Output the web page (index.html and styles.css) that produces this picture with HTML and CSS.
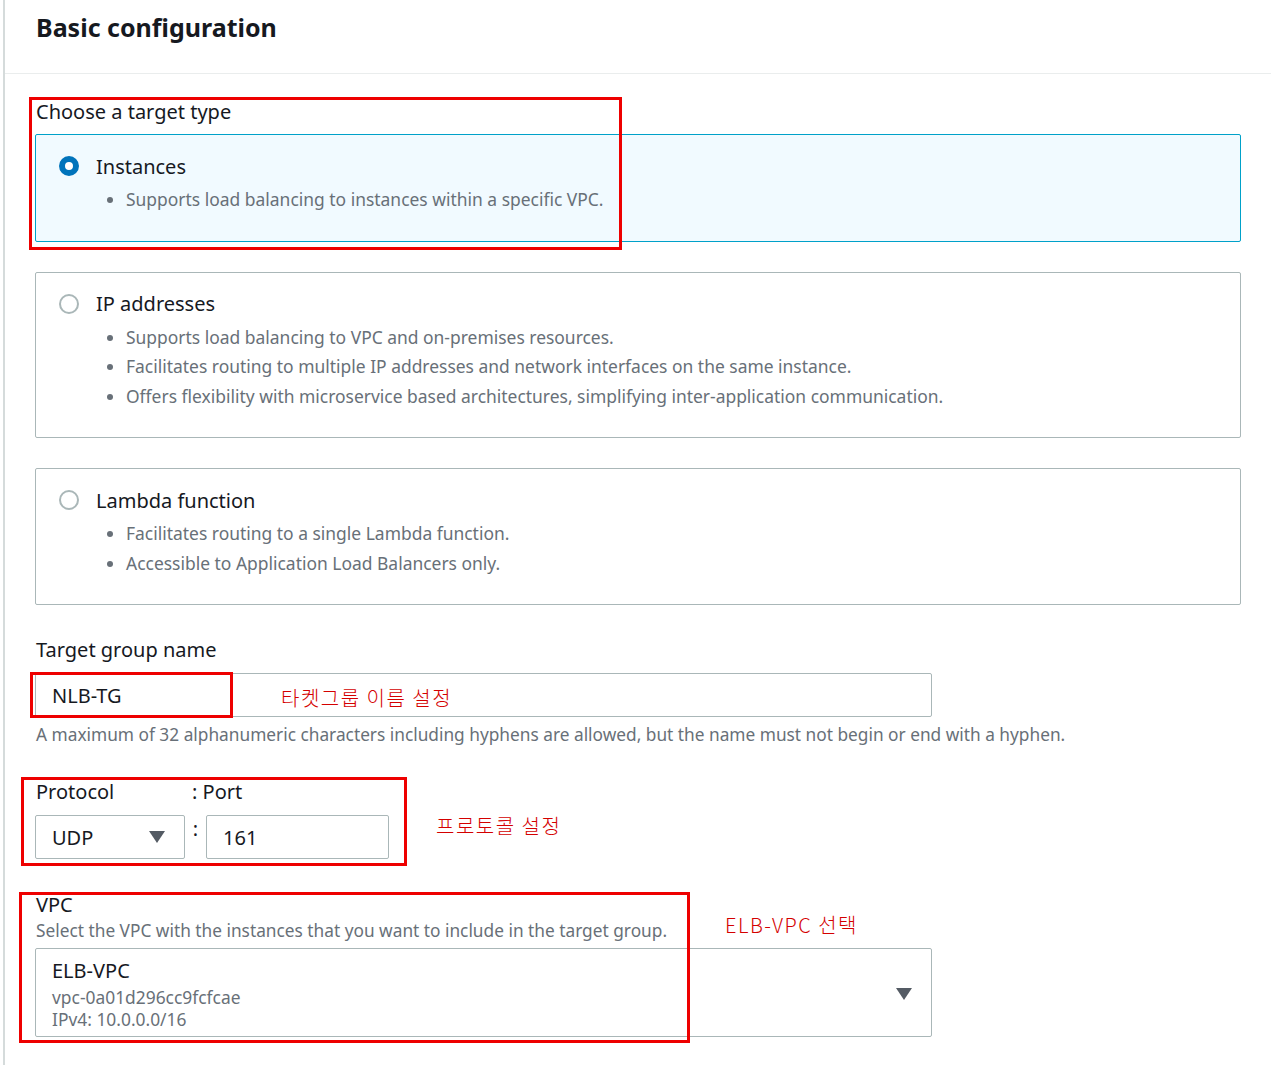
FILE: index.html
```html
<!DOCTYPE html>
<html lang="en">
<head>
    <meta charset="UTF-8">
    <meta name="viewport" content="width=device-width, initial-scale=1.0">
    <title>Basic configuration</title>
    <link rel="stylesheet" href="styles.css">
</head>
<body>
    <div class="page">
        <div class="header">
            <h2>Basic configuration</h2>
        </div>

        <div class="content">
            <div class="field-label">Choose a target type</div>

            <div class="tile selected">
                <div class="tile-head">
                    <span class="radio checked"></span>
                    <span class="tile-title">Instances</span>
                </div>
                <ul>
                    <li>Supports load balancing to instances within a specific VPC.</li>
                </ul>
            </div>

            <div class="tile">
                <div class="tile-head">
                    <span class="radio"></span>
                    <span class="tile-title">IP addresses</span>
                </div>
                <ul>
                    <li>Supports load balancing to VPC and on-premises resources.</li>
                    <li>Facilitates routing to multiple IP addresses and network interfaces on the same instance.</li>
                    <li>Offers flexibility with microservice based architectures, simplifying inter-application communication.</li>
                </ul>
            </div>

            <div class="tile">
                <div class="tile-head">
                    <span class="radio"></span>
                    <span class="tile-title">Lambda function</span>
                </div>
                <ul>
                    <li>Facilitates routing to a single Lambda function.</li>
                    <li>Accessible to Application Load Balancers only.</li>
                </ul>
            </div>

            <div class="field name-field">
                <div class="field-label">Target group name</div>
                <div class="input wide">NLB-TG</div>
                <div class="hint">A maximum of 32 alphanumeric characters including hyphens are allowed, but the name must not begin or end with a hyphen.</div>
            </div>

            <div class="field proto-field">
                <div class="proto-labels">
                    <span class="proto-label">Protocol</span>
                    <span>: Port</span>
                </div>
                <div class="proto-row">
                    <div class="input select proto">
                        <span>UDP</span>
                        <svg class="caret" width="16" height="12" viewBox="0 0 16 12"><polygon points="0,0 16,0 8,12" fill="#545b64"/></svg>
                    </div>
                    <span class="colon">:</span>
                    <div class="input port">161</div>
                </div>
            </div>

            <div class="field vpc-field">
                <div class="field-label tight">VPC</div>
                <div class="hint">Select the VPC with the instances that you want to include in the target group.</div>
                <div class="input select vpc">
                    <div class="vpc-text">
                        <div class="vpc-name">ELB-VPC</div>
                        <div class="vpc-sub first">vpc-0a01d296cc9fcfcae</div>
                        <div class="vpc-sub">IPv4: 10.0.0.0/16</div>
                    </div>
                    <svg class="caret" width="16" height="12" viewBox="0 0 16 12"><polygon points="0,0 16,0 8,12" fill="#545b64"/></svg>
                </div>
            </div>
        </div>

        <!-- annotation overlays -->
        <div class="mark mark-type"></div>
        <div class="mark mark-name"></div>
        <div class="mark mark-proto"></div>
        <div class="mark mark-vpc"></div>

        <div class="note note-name">타켓그룹 이름 설정</div>
        <div class="note note-proto">프로토콜 설정</div>
        <div class="note note-vpc">ELB-VPC 선택</div>
    </div>
</body>
</html>
```

FILE: styles.css
```css
body {
    margin: 0;
    font-family: "Noto Sans", "Open Sans", sans-serif;
    color: #16191f;
    background: #fff;
}

.page {
    position: relative;
    margin-left: 3px;
    border-left: 2px solid #d5dbdb;
    min-height: 1065px;
}

.header {
    height: 73px;
    border-bottom: 1px solid #eaeded;
    padding-left: 31px;
}

.header h2 {
    margin: 0;
    padding-top: 11px;
    font-size: 25px;
    line-height: 32px;
    font-weight: bold;
}

.content {
    padding: 26px 30px 0 30px;
}

.field-label {
    font-size: 20px;
    line-height: 24px;
    margin-bottom: 10px;
    padding-left: 1px;
}

.field-label.tight {
    margin-bottom: 2px;
}

.tile {
    border: 1px solid #aab7b8;
    border-radius: 2px;
    padding: 19px 20px 26px 23px;
    margin-bottom: 30px;
}

.tile.selected {
    border-color: #00a1c9;
    background: #f1faff;
}

.tile-head {
    display: flex;
    align-items: center;
    gap: 17px;
    height: 24px;
}

.radio {
    width: 20px;
    height: 20px;
    box-sizing: border-box;
    border: 2px solid #aab7b8;
    border-radius: 50%;
    background: #fff;
}

.radio.checked {
    border: 6px solid #0073bb;
}

.tile-title {
    font-size: 20px;
}

.tile ul {
    margin: 7px 0 0;
    padding-left: 67px;
    color: #687078;
    font-size: 17.45px;
    line-height: 29.5px;
}

.field {
    margin-bottom: 32px;
}

.name-field {
    margin-top: 33px;
    margin-bottom: 33px;
}

.name-field .field-label {
    margin-bottom: 11px;
}

.input {
    box-sizing: border-box;
    height: 44px;
    border: 1px solid #aab7b8;
    border-radius: 2px;
    padding: 0 16px;
    font-size: 20px;
    display: flex;
    align-items: center;
    background: #fff;
}

.input.wide {
    width: 897px;
}

.hint {
    font-size: 17.3px;
    line-height: 24px;
    color: #687078;
    margin-top: 6px;
    padding-left: 1px;
}

.proto-labels {
    display: flex;
    font-size: 20px;
    line-height: 24px;
    margin-bottom: 11px;
    padding-left: 1px;
}

.proto-label {
    width: 156px;
}

.proto-row {
    display: flex;
    align-items: flex-start;
}

.select {
    justify-content: space-between;
}

.input.proto {
    width: 150px;
    padding-right: 19px;
}

.colon {
    width: 21px;
    text-align: center;
    font-size: 20px;
    line-height: 28px;
}

.input.port {
    width: 183px;
}

.vpc-field {
    margin-top: 34px;
}

.vpc-field .hint {
    margin-top: 0;
    margin-bottom: 5px;
}

.input.vpc {
    width: 897px;
    height: 89px;
    align-items: center;
    padding-right: 19px;
}

.vpc-text {
    align-self: flex-start;
    padding-top: 10px;
}

.vpc-name {
    font-size: 20px;
    line-height: 24px;
}

.vpc-sub {
    font-size: 17.4px;
    line-height: 22px;
    color: #687078;
}

.vpc-sub.first {
    margin-top: 3px;
}

.vpc .caret {
    margin-top: 2px;
}

/* red annotation boxes drawn over the form */
.mark {
    position: absolute;
    box-sizing: border-box;
    border: 3px solid #ee0000;
}

.mark-type { left: 24px; top: 97px; width: 593px; height: 153px; }
.mark-name { left: 25px; top: 672px; width: 203px; height: 46px; }
.mark-proto { left: 16px; top: 777px; width: 386px; height: 89px; }
.mark-vpc { left: 14px; top: 892px; width: 671px; height: 151px; }

.note {
    position: absolute;
    color: #d40000;
    font-family: "Noto Sans CJK KR", "DejaVu Sans", sans-serif;
    font-weight: 300;
    font-size: 20px;
    line-height: 24px;
    letter-spacing: 1.5px;
}

.note-name { left: 276px; top: 686px; }
.note-proto { left: 431px; top: 814px; }
.note-vpc { left: 720px; top: 913px; }
```
